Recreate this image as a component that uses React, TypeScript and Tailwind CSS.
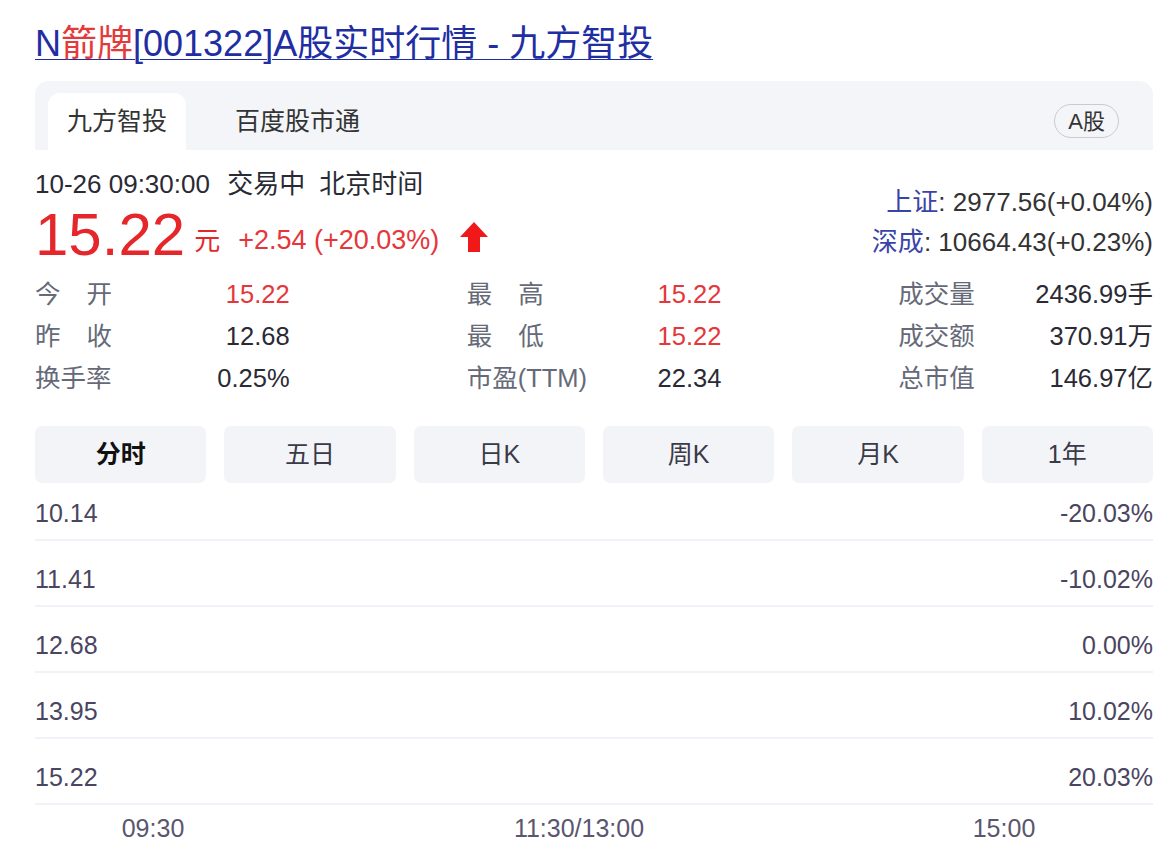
import React from "react";

const FONT = {
  fontFamily: '"Liberation Sans", "Noto Sans CJK SC", Arial, sans-serif',
};

type Stat = { label: string; value: string; red?: boolean; spread?: boolean };

const rows: Stat[][] = [
  [
    { label: "今开", value: "15.22", red: true, spread: true },
    { label: "最高", value: "15.22", red: true, spread: true },
    { label: "成交量", value: "2436.99手" },
  ],
  [
    { label: "昨收", value: "12.68", spread: true },
    { label: "最低", value: "15.22", red: true, spread: true },
    { label: "成交额", value: "370.91万" },
  ],
  [
    { label: "换手率", value: "0.25%" },
    { label: "市盈(TTM)", value: "22.34" },
    { label: "总市值", value: "146.97亿" },
  ],
];

const periods = ["分时", "五日", "日K", "周K", "月K", "1年"];

const chartRows = [
  ["10.14", "-20.03%"],
  ["11.41", "-10.02%"],
  ["12.68", "0.00%"],
  ["13.95", "10.02%"],
  ["15.22", "20.03%"],
];

function UpArrow() {
  return (
    <svg width="30" height="32" viewBox="0 0 30 32" className="ml-[20px] mt-[18px]">
      <path d="M15 1 L29 16 L21 16 L21 31 L9 31 L9 16 L1 16 Z" fill="#f01818" />
    </svg>
  );
}

function StatLabel({ text, spread }: { text: string; spread?: boolean }) {
  if (spread) {
    return (
      <span className="flex w-[77px] justify-between text-[#666a78]">
        {text.split("").map((c) => (
          <span key={c}>{c}</span>
        ))}
      </span>
    );
  }
  return <span className="text-[#666a78]">{text}</span>;
}

export default function App() {
  return (
    <div className="min-h-[854px] w-[1174px] bg-white pl-[35px] pr-[21px] text-[#333]" style={FONT}>
      {/* 标题 */}
      <div className="pt-[22px] text-[36px] leading-[44px]">
        <a href="#" className="text-[#1f2ea3] underline decoration-1 underline-offset-[3px]">
          N<span className="text-[#e33b3b]">箭牌</span>[001322]A股实时行情 - 九方智投
        </a>
      </div>

      {/* 来源标签栏 */}
      <div className="mt-[15px] flex h-[69px] items-end rounded-t-[14px] bg-[#f4f5f9] pl-[13px] pr-[34px]">
        <div className="flex h-[57px] w-[138px] items-center justify-center rounded-t-[12px] bg-white text-[25px]">
          九方智投
        </div>
        <div className="ml-[49px] flex h-[57px] items-center text-[25px]">百度股市通</div>
        <div className="ml-auto mb-[12px] flex h-[34px] items-center rounded-full border border-[#c9cbd3] px-[13px] text-[22px]">
          A股
        </div>
      </div>

      {/* 价格区 */}
      <div className="flex items-start justify-between">
        <div>
          <div className="mt-[19px] text-[26px] leading-[30px] text-[#2a2a35]">
            10-26 09:30:00 <span className="ml-[10px]">交易中</span>
            <span className="ml-[14px]">北京时间</span>
          </div>
          <div className="mt-[4px] flex items-start">
            <span className="text-[60px] leading-[64px] text-[#e5262b]">15.22</span>
            <span className="ml-[9px] mt-[23px] text-[26px] leading-[30px] text-[#e5262b]">元</span>
            <span className="ml-[18px] mt-[22px] text-[27px] leading-[30px] text-[#e5363b]">
              +2.54 (+20.03%)
            </span>
            <UpArrow />
          </div>
        </div>
        <div className="mt-[32px] text-right text-[26px] leading-[40px]">
          <div>
            <span className="text-[#3844a6]">上证</span>: 2977.56(+0.04%)
          </div>
          <div>
            <span className="text-[#3844a6]">深成</span>: 10664.43(+0.23%)
          </div>
        </div>
      </div>

      {/* 行情数据 */}
      <div className="mt-[6px] grid grid-cols-3 gap-x-[177px] text-[25.5px] leading-[42px]">
        {rows.flat().map((s) => (
          <div key={s.label} className="flex justify-between">
            <StatLabel text={s.label} spread={s.spread} />
            <span className={s.red ? "text-[#e5363b]" : "text-[#2a2a35]"}>{s.value}</span>
          </div>
        ))}
      </div>

      {/* 周期切换 */}
      <div className="mt-[27px] grid grid-cols-6 gap-x-[18px]">
        {periods.map((p, i) => (
          <div
            key={p}
            className={`flex h-[57px] items-center justify-center rounded-[7px] bg-[#f3f4f8] text-[25px] ${
              i === 0 ? "font-bold text-[#111]" : "text-[#3a3a48]"
            }`}
          >
            {p}
          </div>
        ))}
      </div>

      {/* 分时坐标 */}
      <div className="text-[25px] text-[#4a4560]">
        {chartRows.map(([l, r], i) => (
          <div
            key={l}
            className={`flex items-end justify-between border-b-2 border-[#f0f2f7] pb-[12px] leading-[28px] ${
              i === 0 ? "h-[58px]" : "h-[66px]"
            }`}
          >
            <span>{l}</span>
            <span>{r}</span>
          </div>
        ))}
        <div className="flex h-[48px] items-center text-[25px] text-[#5a5670]">
          <span className="w-[236px] text-center">09:30</span>
          <span className="w-[616px] text-center">11:30/13:00</span>
          <span className="w-[234px] text-center">15:00</span>
        </div>
      </div>
    </div>
  );
}
